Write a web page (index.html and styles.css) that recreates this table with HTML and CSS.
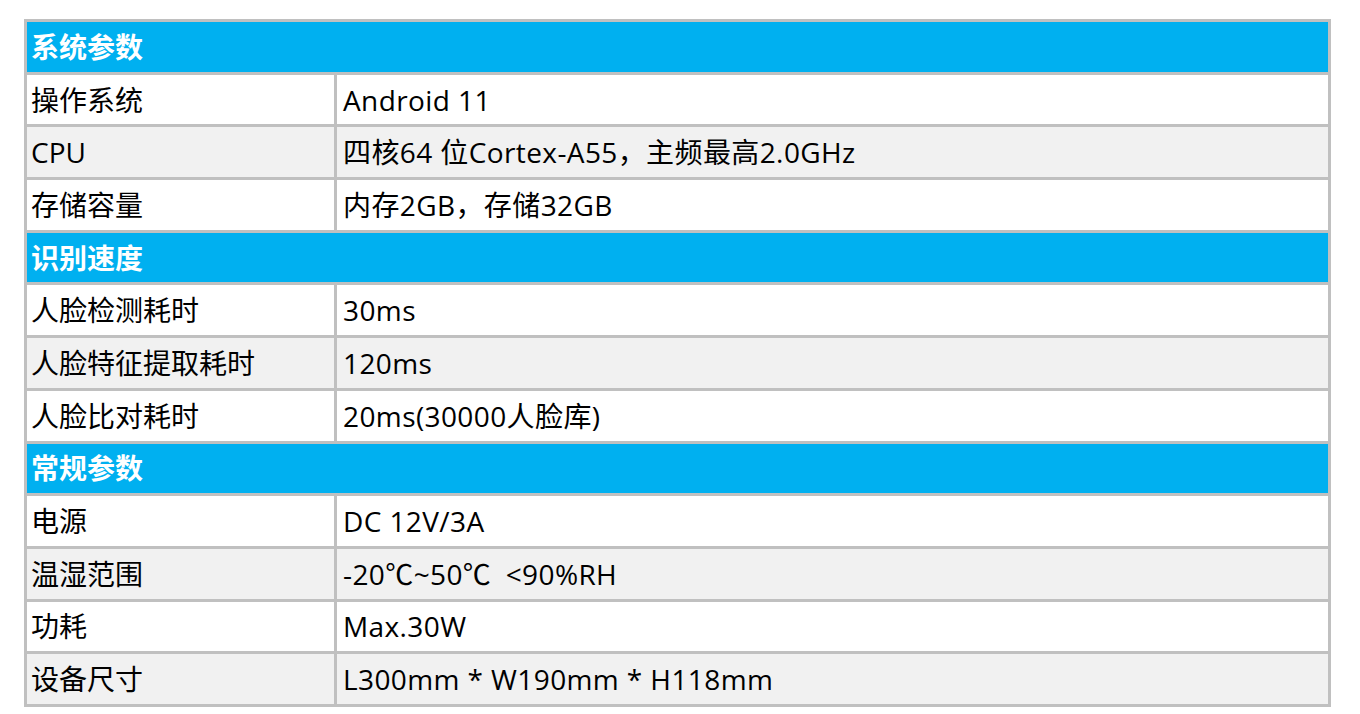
FILE: index.html
```html
<!DOCTYPE html>
<html lang="zh-CN">
<head>
<meta charset="utf-8">
<title>参数表</title>
<link rel="stylesheet" href="styles.css">
</head>
<body>
<table class="spec">
  <colgroup><col class="c1"><col class="c2"></colgroup>
  <tbody>
    <tr class="head"><td colspan="2">系统参数</td></tr>
    <tr><td>操作系统</td><td class="v">Android 11</td></tr>
    <tr class="alt"><td>CPU</td><td class="v">四核64 位Cortex-A55，主频最高2.0GHz</td></tr>
    <tr><td>存储容量</td><td class="v">内存2GB，存储32GB</td></tr>
    <tr class="head"><td colspan="2">识别速度</td></tr>
    <tr><td>人脸检测耗时</td><td class="v">30ms</td></tr>
    <tr class="alt"><td>人脸特征提取耗时</td><td class="v">120ms</td></tr>
    <tr><td>人脸比对耗时</td><td class="v">20ms(30000人脸库)</td></tr>
    <tr class="head"><td colspan="2">常规参数</td></tr>
    <tr><td>电源</td><td class="v">DC 12V/3A</td></tr>
    <tr class="alt"><td>温湿范围</td><td class="v">-20℃~50℃&ensp;&lt;90%RH</td></tr>
    <tr><td>功耗</td><td class="v">Max.30W</td></tr>
    <tr class="alt"><td>设备尺寸</td><td class="v">L300mm * W190mm * H118mm</td></tr>
  </tbody>
</table>
</body>
</html>
```
FILE: styles.css
```css
html, body {
  margin: 0;
  padding: 0;
  background: #ffffff;
}
body {
  padding: 19px 0 0 24px;
  font-family: "Open Sans", "Noto Sans CJK SC", sans-serif;
  font-size: 28px;
  color: #000000;
}
.spec {
  width: 1307px;
  table-layout: fixed;
  border-collapse: separate;
  border-spacing: 0;
  border-top: 3px solid #c0c0c0;
  border-left: 3px solid #c0c0c0;
}
.spec .c1 { width: 310px; }
.spec .c2 { width: 994px; }
.spec td {
  box-sizing: border-box;
  height: 52.7px;
  padding: 0 4px;
  border-right: 3px solid #c0c0c0;
  border-bottom: 3px solid #c0c0c0;
  background: #ffffff;
  vertical-align: middle;
  line-height: 1;
  white-space: nowrap;
}
.spec td.v {
  padding-left: 6px;
  letter-spacing: 0.4px;
}
.spec tr.alt td {
  background: #f1f1f1;
}
.spec tr.head td {
  background: #00b0f0;
  color: #ffffff;
  font-weight: bold;
}
```
